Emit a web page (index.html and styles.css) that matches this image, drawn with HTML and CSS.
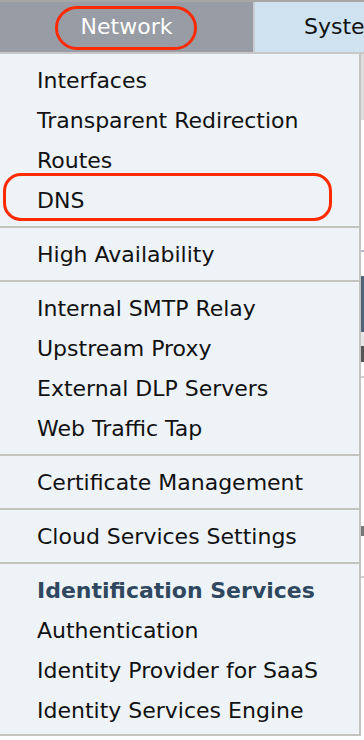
FILE: index.html
```html
<!DOCTYPE html>
<html lang="en">
<head>
  <meta charset="UTF-8">
  <meta name="viewport" content="width=device-width, initial-scale=1.0">
  <title>Network menu</title>
  <link rel="stylesheet" href="styles.css">
</head>
<body>
  <div class="top-line"></div>

  <nav class="tabs">
    <div class="tab tab-active">Network</div>
    <div class="tab">System Administration</div>
  </nav>

  <div class="page">
    <div class="menu">
      <ul class="group">
        <li>Interfaces</li>
        <li>Transparent Redirection</li>
        <li>Routes</li>
        <li>DNS</li>
      </ul>
      <ul class="group">
        <li>High Availability</li>
      </ul>
      <ul class="group">
        <li>Internal SMTP Relay</li>
        <li>Upstream Proxy</li>
        <li>External DLP Servers</li>
        <li>Web Traffic Tap</li>
      </ul>
      <ul class="group">
        <li>Certificate Management</li>
      </ul>
      <ul class="group">
        <li>Cloud Services Settings</li>
      </ul>
      <ul class="group">
        <li class="heading">Identification Services</li>
        <li>Authentication</li>
        <li>Identity Provider for SaaS</li>
        <li>Identity Services Engine</li>
      </ul>
    </div>

    <!-- sliver of the page behind the dropdown -->
    <div class="behind">
      <div class="b-grey"></div>
      <div class="b-white h130"></div>
      <div class="b-rule"></div>
      <div class="b-white h24"></div>
      <div class="b-block"></div>
      <div class="b-light"></div>
      <div class="b-glyph"></div>
      <div class="b-white h14"></div>
      <div class="b-rule grey"></div>
      <div class="b-white h148"></div>
      <div class="b-glyph small"></div>
      <div class="b-white h40"></div>
      <div class="b-rule grey"></div>
    </div>
  </div>

  <!-- red annotation rings -->
  <div class="mark mark-network"></div>
  <div class="mark mark-dns"></div>
</body>
</html>
```

FILE: styles.css
```css
body {
  margin: 0;
  width: 364px;
  height: 740px;
  overflow: hidden;
  font-family: Verdana, 'DejaVu Sans', sans-serif;
  font-size: 22px;
  color: #111;
  background-color: #fff;
}

.top-line {
  height: 2px;
  background-color: #a7a7a7;
}

.tabs {
  display: flex;
  height: 50px;
  border-bottom: 2px solid #c7c7c7;
}

.tab {
  display: flex;
  align-items: center;
  white-space: nowrap;
  overflow: hidden;
  flex: 1;
  padding-left: 49px;
  padding-bottom: 2px;
  background-color: #cfe2f0;
  border-left: 2px solid #c9cdd2;
}

.tab-active {
  flex: 0 0 253px;
  justify-content: center;
  padding-left: 0;
  border-left: none;
  background-color: #979ca5;
  color: #fff;
}

.page {
  display: flex;
}

.menu {
  width: 359px;
  background-color: #eef3f8;
  border-right: 2px solid #c3c3c0;
  border-bottom: 2px solid #c3c3c0;
}

.group {
  list-style: none;
  margin: 0;
  padding: 6px 0;
  border-bottom: 2px solid #c3c3c0;
}

.group:last-child {
  border-bottom: none;
  padding-bottom: 4px;
}

.group li {
  height: 40px;
  line-height: 42px;
  padding-left: 37px;
  white-space: nowrap;
}

.group .heading {
  font-weight: bold;
  color: #2f4860;
}

.behind {
  flex: 1;
  display: flex;
  flex-direction: column;
}

.b-grey {
  height: 66px;
  background-color: #dcdcdc;
}

.b-white {
  background-color: #fff;
}

.h14 { height: 14px; }
.h24 { height: 24px; }
.h40 { height: 40px; }
.h130 { height: 130px; }
.h148 { height: 148px; }

.b-rule {
  height: 2px;
  background-color: #b9b9d6;
}

.b-rule.grey {
  background-color: #cfcfcf;
}

.b-block {
  height: 56px;
  background-color: #4f6478;
}

.b-light {
  height: 14px;
  background-color: #e6e6e6;
}

.b-glyph {
  height: 16px;
  background-color: #555;
}

.b-glyph.small {
  height: 10px;
  background-color: #777;
}

.mark {
  position: absolute;
  border: 3px solid #ff2a00;
  box-sizing: border-box;
}

.mark-network {
  left: 55px;
  top: 6px;
  width: 142px;
  height: 44px;
  border-radius: 22px;
}

.mark-dns {
  left: 3px;
  top: 173px;
  width: 329px;
  height: 48px;
  border-radius: 18px;
}
```
